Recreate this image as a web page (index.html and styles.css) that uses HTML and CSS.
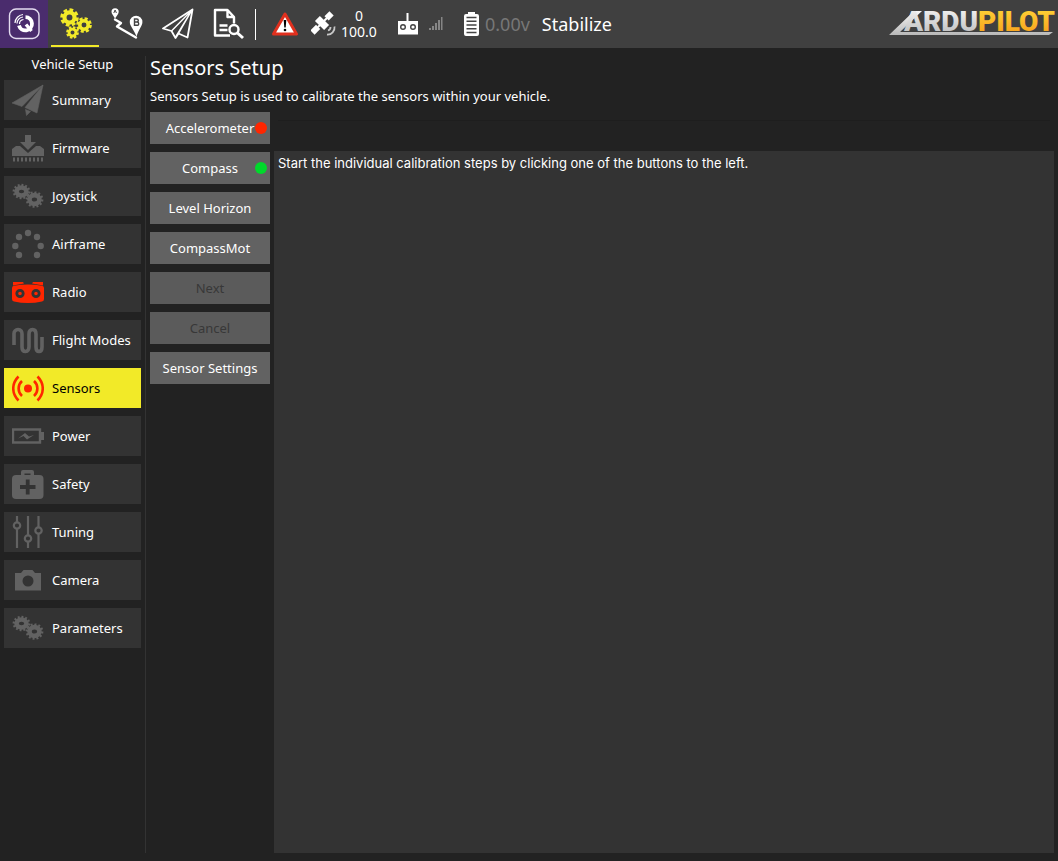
FILE: index.html
```html
<!DOCTYPE html>
<html lang="en">
<head>
<meta charset="utf-8">
<title>Vehicle Setup</title>
<link rel="stylesheet" href="styles.css">
</head>
<body>
<svg class="defs" aria-hidden="true">
  <symbol id="gear" viewBox="0 0 20 20">
    <circle cx="10" cy="10" r="5.3" fill="none" stroke="currentColor" stroke-width="4.400"/>
    <circle cx="10" cy="10" r="8" fill="none" stroke="currentColor" stroke-width="3.6" pathLength="16" stroke-dasharray="1.200 .8"/>
  </symbol>
  <symbol id="cogs" viewBox="0 0 32 32">
    <g fill="none" stroke="currentColor">
      <ellipse cx="9.500" cy="11.500" rx="5" ry="4" stroke-width="4.600"/>
      <ellipse cx="9.500" cy="11.500" rx="7.8" ry="6.6" stroke-width="2.2" pathLength="24" stroke-dasharray="1 1"/>
      <ellipse cx="22.500" cy="19.500" rx="5" ry="4.400" stroke-width="4.600"/>
      <ellipse cx="22.500" cy="19.500" rx="7.8" ry="7.2" stroke-width="2.2" pathLength="24" stroke-dasharray="1 1"/>
    </g>
  </symbol>
</svg>

<header class="toolbar">
  <nav class="tools" aria-label="Views">
    <button class="tool brand" aria-label="Application settings">
      <svg width="32" height="32" viewBox="0 0 32 32" fill="none" stroke="#fff">
        <rect x="1.5" y="1" width="29.5" height="29.5" rx="6.5" stroke="#e4dcf0" stroke-width="1.4"/>
        <path d="M17.5 9.2A6.6 6.6 0 1 1 11 17.5" stroke-width="3.8"/>
        <path d="M18 16.500l5.500 6.500" stroke-width="3.4"/>
        <path d="M7 15a9 9 0 0 1 8-8.500M9 15.500a6.500 6.500 0 0 1 6-6.500M11.500 16a4.500 4.500 0 0 1 4-4.500" stroke-width="1.200"/>
      </svg>
    </button>
    <button class="tool selected" aria-label="Vehicle setup">
      <svg width="32" height="32" viewBox="0 0 32 32">
        <use href="#gear" x="0" y="0" width="19" height="19"/>
        <use href="#gear" x="16" y="9" width="16" height="16"/>
        <use href="#gear" x="6" y="18" width="13" height="13"/>
      </svg>
    </button>
    <button class="tool" aria-label="Plan">
      <svg width="32" height="32" viewBox="0 0 32 32">
        <path d="M4 10.500C2 7 .5 6 .5 3.800a3.600 3.600 0 0 1 7.200 0C7.700 6 6 7.500 4 10.500Z" fill="#fff"/>
        <path d="M2.800 5l1.300-3 1.300 3" fill="none" stroke="#444"/>
        <path d="M4 11.500l6 3.500-4 3.500 6 3.500 13 7.500" fill="none" stroke="#fff" stroke-width="2.400" stroke-linejoin="round" stroke-linecap="round"/>
        <path d="M25.500 28.500C22 20 18.800 18 18.800 14a6.200 6.200 0 0 1 12.600 0c0 4-3.400 6.500-5.900 14.500Z" fill="#fff"/>
        <path d="M23.500 11h2.300q1.500 0 1.500 1.500t-1.500 1.500h-2.300 2.500q1.700 0 1.700 1.700t-1.700 1.600h-2.500Z" fill="none" stroke="#444" stroke-width="1.400"/>
      </svg>
    </button>
    <button class="tool" aria-label="Fly">
      <svg width="32" height="32" viewBox="0 0 32 32" fill="none" stroke="#fff" stroke-width="1.800" stroke-linejoin="round">
        <path d="M30.500 1.500 1 20.500l8.500 2.500 4 7 3-4.500 9 4Z"/>
        <path d="M30 2 9.500 23M30 2 13.500 29M30 2 16.500 25.500" stroke-width="1.400"/>
      </svg>
    </button>
    <button class="tool" aria-label="Analyze">
      <svg width="32" height="32" viewBox="0 0 32 32" fill="none" stroke="#fff" stroke-width="2.400" stroke-linejoin="round">
        <path d="M17 27.500H2V2h12.500l6.500 7v6.500M14.500 2v7H21"/>
        <path d="M6.500 17.500h8M6.500 22h8"/>
        <circle cx="21" cy="21.500" r="4.500"/>
        <path d="M24.500 25l5.500 5" stroke-width="3"/>
      </svg>
    </button>
  </nav>
  <div class="divider"></div>
  <div class="status">
    <svg class="alert" width="26" height="24" viewBox="0 0 26 24">
      <path d="M13 2 24.500 22h-23Z" fill="#fff" stroke="#e0301e" stroke-width="3" stroke-linejoin="round"/>
      <path d="M11.700 8h2.600l-.6 7.500h-1.400Z"/><circle cx="13" cy="18" r="1.300"/>
    </svg>
    <div class="gps">
      <svg width="26" height="26" viewBox="0 0 26 26">
        <g transform="rotate(-45 11 12)" fill="#fff">
          <rect x="-2.500" y="9" width="8" height="6"/><rect x="17.500" y="9" width="7" height="6"/>
          <rect x="5" y="11" width="13" height="2"/><rect x="7.500" y="5.500" width="7" height="13"/>
        </g>
        <path d="M17 19.500a3.500 3.500 0 0 0 2.500-3.500M16 23.500a7 7 0 0 0 7.500-8" fill="none" stroke="#c8c8c8" stroke-width="1.800"/>
      </svg>
      <div class="gps-values"><span>0</span><span>100.0</span></div>
    </div>
    <div class="rc">
      <svg width="20" height="22" viewBox="0 0 20 22">
        <path d="M8.500 0h2v8H20v13.500H0V8h8.500Z" fill="#fff"/>
        <g fill="none" stroke="#444" stroke-width="1.400"><circle cx="5" cy="14" r="2.300"/><circle cx="15" cy="14" r="2.300"/></g>
      </svg>
      <svg width="14" height="14" viewBox="0 0 14 14" fill="#858585">
        <path d="M0 11h2v2H0ZM3 9h2v4H3ZM6 6h2v7H6ZM9 3h2v10H9ZM12 0h1.500v13H12Z"/>
      </svg>
    </div>
    <div class="battery">
      <svg width="17" height="26" viewBox="0 0 17 26">
        <path d="M5 3V1h7v2h2q2 0 2 2v18q0 2-2 2H3q-2 0-2-2V5q0-2 2-2Z" fill="#fff"/>
        <path d="M3.500 6.500h10M3.500 10.200h10M3.500 14h10M3.500 17.800h10M3.500 21.500h10" stroke="#444" stroke-width="1.500"/>
      </svg>
      <span>0.00v</span>
    </div>
    <span class="mode">Stabilize</span>
  </div>
  <svg class="logo" width="168" height="40" viewBox="0 0 168 40" role="img" aria-label="ArduPilot">
    <defs>
      <linearGradient id="silver" x2="0" y2="1"><stop offset="0" stop-color="#f8f8f8"/><stop offset="1" stop-color="#b8b8b8"/></linearGradient>
      <linearGradient id="gold" x2="0" y2="1"><stop offset="0" stop-color="#ffd83a"/><stop offset="1" stop-color="#f79a18"/></linearGradient>
    </defs>
    <path d="M0 31 25 7h8L11 28h153l-4 3Z" fill="url(#silver)"/>
    <text x="15" y="27" fill="url(#silver)">ARDU<tspan fill="url(#gold)">PILOT</tspan></text>
  </svg>
</header>

<div class="page">
  <aside class="sidebar">
    <h2>Vehicle Setup</h2>
    <nav class="menu" aria-label="Vehicle setup pages">
      <button><svg viewBox="0 0 32 32"><path d="M31 1 0 19l10 3.500ZM31 1 13 23.500 25 29ZM13.500 25.500l5 2-4 4Z" fill="currentColor" stroke="currentColor" stroke-width=".6"/></svg>Summary</button>
      <button><svg viewBox="0 0 32 32" fill="currentColor"><path d="M13 3h6v7h5l-8 8-8-8h5Z"/><path d="M0 24v-7l4-3h4l8 7 8-7h4l4 3v7Z"/><path d="M1 27.500h31" stroke="currentColor" stroke-width="4" stroke-dasharray="2 2"/></svg>Firmware</button>
      <button><svg><use href="#cogs"/></svg>Joystick</button>
      <button><svg viewBox="0 0 32 32" fill="currentColor"><circle cx="16" cy="5" r="3.200"/><circle cx="7" cy="9" r="3.200"/><circle cx="25" cy="9" r="3.200"/><circle cx="3.300" cy="18" r="3.200"/><circle cx="28.700" cy="18" r="3.200"/><circle cx="7" cy="27" r="3.200"/><circle cx="25" cy="27" r="3.200"/></svg>Airframe</button>
      <button><svg class="warn" viewBox="0 0 32 32"><path d="M1 6h10l1 1.500-11 2ZM31 6H21l-1 1.500 11 2Z" fill="currentColor"/><path d="M0 12q0-2 2-2.300Q16 7.500 30 9.700q2 .3 2 2.300v11q0 2-2 2.500-14 3-28 0-2-.5-2-2.500Z" fill="currentColor"/><g fill="currentColor" stroke="#333" stroke-width="2.800"><circle cx="8" cy="17.500" r="3.200"/><circle cx="24" cy="17.500" r="3.200"/></g></svg>Radio</button>
      <button><svg viewBox="0 0 32 32"><path d="M2 21V9.500a4 4 0 0 1 4-4c3 0 4 2 4 4.500v13c0 2.500 1 4.500 3.500 4.500S17 25 17 23V10c0-2.500 1-4.500 3.500-4.500S24 7.500 24 10v13c0 2.500 1 4.500 3 4.500s3-2 3-4.500V13" fill="none" stroke="currentColor" stroke-width="3.600"/></svg>Flight Modes</button>
      <button class="current"><svg class="warn" viewBox="0 0 32 32" fill="none" stroke="currentColor" stroke-width="2.600"><circle cx="16" cy="16.500" r="4" fill="currentColor" stroke="none"/><path d="M10 9a10 10 0 0 0 0 15M22 9a10 10 0 0 1 0 15M6.500 4.500c-7 7-7 17 0 24M25.500 4.500c7 7 7 17 0 24"/></svg>Sensors</button>
      <button><svg viewBox="0 0 32 32"><path d="M1 9.500h27v13H1Z" fill="none" stroke="currentColor" stroke-width="2.400"/><path d="M29 12h3v8h-3ZM6 18.500l7-5.500 4 3.500 5-1.500-7 4.500-3.500-3.500Z" fill="currentColor"/></svg>Power</button>
      <button><svg viewBox="0 0 32 32"><path d="M9 8V4q0-2 2-2h9q2 0 2 2v4h-3.500V5.500h-6V8Z" fill="currentColor"/><rect y="7" width="31.500" height="24" rx="4" fill="currentColor"/><path d="M15.700 11.500v15M8 19h15.500" stroke="#333" stroke-width="3.800"/></svg>Safety</button>
      <button><svg viewBox="0 0 32 32" fill="none" stroke="currentColor" stroke-width="2.200"><path d="M5 0v6M5 13v19M16 0v19M16 26v6M26.500 0v11M26.500 18v14"/><circle cx="5" cy="9.500" r="3.200"/><circle cx="16" cy="22.500" r="3.200"/><circle cx="26.500" cy="14.500" r="3.200"/></svg>Tuning</button>
      <button><svg viewBox="0 0 32 32"><path d="M3 9h6l2.500-3h9L23 9h6v17.500H3Z" fill="currentColor"/><circle cx="16" cy="17" r="5.500" fill="#333"/></svg>Camera</button>
      <button><svg><use href="#cogs"/></svg>Parameters</button>
    </nav>
  </aside>

  <main class="content">
    <h1>Sensors Setup</h1>
    <p class="intro">Sensors Setup is used to calibrate the sensors within your vehicle.</p>
    <div class="workspace">
      <div class="actions">
        <button>Accelerometer<span class="dot red"></span></button>
        <button>Compass<span class="dot green"></span></button>
        <button>Level Horizon</button>
        <button>CompassMot</button>
        <button disabled>Next</button>
        <button disabled>Cancel</button>
        <button>Sensor Settings</button>
      </div>
      <div class="result">
        <div class="progress" role="progressbar" aria-label="Calibration progress"></div>
        <div class="log">Start the individual calibration steps by clicking one of the buttons to the left.</div>
      </div>
    </div>
  </main>
</div>
</body>
</html>
```
FILE: styles.css
```css
* {
  box-sizing: border-box;
}

body {
  display: flex;
  flex-direction: column;
  min-height: 100vh;
  margin: 0;
  background: #222;
  color: #fff;
  font: 13px/16px "Noto Sans", "Open Sans", sans-serif;
}

button {
  border: 0;
  padding: 0;
  color: inherit;
  font: inherit;
}

svg {
  flex: none;
}

.defs {
  position: absolute;
  width: 0;
  height: 0;
}

.toolbar {
  display: flex;
  align-items: center;
  height: 48px;
  padding-right: 1px;
  background: #404040;
}

.tools {
  display: flex;
  gap: 3px;
}

.tool {
  display: flex;
  align-items: center;
  justify-content: center;
  width: 48px;
  height: 48px;
  padding-left: 2px;
  background: none;
}

.tool.brand {
  padding-left: 0;
  background: #4a2c6d;
}

.tool.selected {
  border-bottom: 2px solid #f2ea28;
  border-top: 2px solid transparent;
  height: 47px;
  color: #f2ea28;
}

.divider {
  width: 1px;
  height: 31px;
  margin-left: 3px;
  background: #fff;
}

.status {
  display: flex;
  align-items: center;
  margin-left: 16px;
}

.gps {
  display: flex;
  align-items: center;
  gap: 3px;
  margin-left: 13px;
}

.gps-values {
  display: flex;
  flex-direction: column;
  align-items: center;
  width: 38px;
  font-size: 14px;
  line-height: 16px;
}

.rc {
  display: flex;
  align-items: center;
  gap: 11px;
  margin-left: 20px;
}

.battery {
  display: flex;
  align-items: center;
  gap: 5px;
  margin-left: 20px;
  color: #777;
  font-size: 18px;
}

.mode {
  margin-left: 12px;
  font-size: 18px;
}

.logo {
  margin-left: auto;
}

.logo text {
  font: 900 28px Roboto, sans-serif;
}

.page {
  display: flex;
  flex: 1;
  padding: 8px 4px;
}

.sidebar {
  width: 142px;
  padding-right: 4px;
  border-right: 1px solid #333;
}

.sidebar h2 {
  margin: 0 0 8px;
  font-size: 13px;
  font-weight: 400;
  text-align: center;
}

.menu {
  display: flex;
  flex-direction: column;
  gap: 8px;
}

.menu button {
  display: flex;
  align-items: center;
  gap: 8px;
  height: 40px;
  padding: 0 8px;
  background: #333;
  white-space: nowrap;
}

.menu svg {
  width: 32px;
  height: 32px;
  color: #626262;
}

.menu svg.warn {
  color: #ff2600;
}

.menu .current {
  background: #f2ea28;
  color: #000;
}

.content {
  display: flex;
  flex: 1;
  flex-direction: column;
  padding-left: 4px;
}

h1 {
  margin: 0;
  font-size: 20px;
  font-weight: 400;
  line-height: 24px;
}

.intro {
  margin: 8px 0;
}

.workspace {
  display: flex;
  flex: 1;
  gap: 4px;
}

.actions {
  display: flex;
  flex-direction: column;
  gap: 8px;
  width: 120px;
}

.actions button {
  position: relative;
  height: 32px;
  background: #626262;
}

.actions button:disabled {
  background: #5b5b5b;
  color: #383838;
}

.dot {
  position: absolute;
  top: 10px;
  right: 3px;
  width: 12px;
  height: 12px;
  border-radius: 50%;
}

.red {
  background: #ff2600;
}

.green {
  background: #00d92b;
}

.result {
  display: flex;
  flex: 1;
  flex-direction: column;
}

.progress {
  height: 20px;
  margin: 8px 4px 11px;
  border-top: 1px solid #1e1e1e;
  background: #222;
}

.log {
  flex: 1;
  padding: 4px;
  background: #333;
  font-family: Inter, "Liberation Sans", sans-serif;
}
```
